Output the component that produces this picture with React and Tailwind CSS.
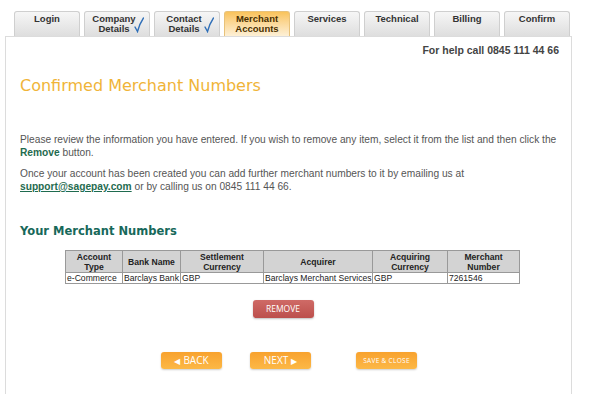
const TABS = [
  { label: ['Login'] },
  { label: ['Company', 'Details'], done: true },
  { label: ['Contact', 'Details'], done: true },
  { label: ['Merchant', 'Accounts'], active: true },
  { label: ['Services'] },
  { label: ['Technical'] },
  { label: ['Billing'] },
  { label: ['Confirm'] },
]

const COLS = [
  { label: ['Account', 'Type'], w: 'w-[57px]', v: 'e-Commerce' },
  { label: ['Bank Name'], w: 'w-[58px]', v: 'Barclays Bank' },
  { label: ['Settlement', 'Currency'], w: 'w-[83px]', v: 'GBP' },
  { label: ['Acquirer'], w: 'w-[109px]', v: 'Barclays Merchant Services' },
  { label: ['Acquiring', 'Currency'], w: 'w-[75px]', v: 'GBP' },
  { label: ['Merchant', 'Number'], w: 'w-[72px]', v: '7261546' },
]

function Tab({ tab }) {
  const base = tab.active
    ? 'bg-gradient-to-b from-[#f9c35a] to-[#fdf0d6] border-[#e8c27a] text-[#4a3000]'
    : 'bg-gradient-to-b from-[#f6f6f6] to-[#dedede] border-[#cfcfcf] text-[#333]'
  return (
    <div className={`relative w-[66px] h-[25px] pt-[2px] rounded-t-[3px] border border-b-0 flex items-start justify-center ${base}`}>
      <div className={`text-center text-[9.5px] font-bold leading-[10px] ${tab.done ? 'mr-[6px]' : ''}`}>
        {tab.label.map((l) => <div key={l}>{l}</div>)}
      </div>
      {tab.done && (
        <svg className="absolute right-[5px] top-[5px]" width="10" height="16" viewBox="0 0 10 16">
          <path d="M1 10 L3.5 14.5 Q5.5 7 9.5 1" fill="none" stroke="#2f6fb8" strokeWidth="1.4" strokeLinecap="round" />
        </svg>
      )}
    </div>
  )
}

function OrangeBtn({ children, small }) {
  return (
    <div className={`w-[61px] h-[17px] rounded-[3px] bg-gradient-to-b from-[#f8a22e] to-[#fcb846] shadow-[0_1px_2px_rgba(0,0,0,0.2)] flex items-center justify-center text-white font-['Open_Sans',sans-serif] ${small ? 'text-[6.5px] tracking-[0.3px]' : 'text-[10px]'}`}>
      {children}
    </div>
  )
}

export default function App() {
  return (
    <div className="w-[590px] h-[394px] overflow-hidden bg-white font-['Liberation_Sans',Arial,sans-serif]">
      <div className="flex gap-[4px] pl-[14px] pt-[11px]">
        {TABS.map((t, i) => <Tab key={i} tab={t} />)}
      </div>
      <div className="ml-[5px] w-[567px] h-[400px] border border-[#dcdcdc]">
        <div className="text-right pr-[12px] pt-[6px] text-[10.5px] font-bold text-[#444]">
          For help call 0845 111 44 66
        </div>
        <h1 className="mt-[15px] ml-[14px] text-[16px] text-[#f0b438] font-['DejaVu_Sans',Verdana,sans-serif]">
          Confirmed Merchant Numbers
        </h1>
        <div className="mt-[35px] ml-[14px] pr-[4px] text-[10.2px] leading-[13px] text-[#555]">
          <p>
            Please review the information you have entered. If you wish to remove any item, select it from the list and then click the{' '}
            <b className="text-[#1f6b4f]">Remove</b> button.
          </p>
          <p className="mt-[8px]">
            Once your account has been created you can add further merchant numbers to it by emailing us at{' '}
            <br />
            <a className="font-bold underline text-[#1f6b4f]">support@sagepay.com</a> or by calling us on 0845 111 44 66.
          </p>
        </div>
        <h2 className="mt-[30px] ml-[14px] text-[11.5px] font-bold text-[#17685a] font-['DejaVu_Sans',Verdana,sans-serif]">
          Your Merchant Numbers
        </h2>
        <table className="mt-[10px] ml-[59px] w-[454px] table-fixed border-collapse text-[8.6px] text-[#222]">
          <thead>
            <tr className="bg-[#d3d3d3]">
              {COLS.map((c) => (
                <th key={c.v + c.w} className={`${c.w} h-[22px] border border-[#999] font-bold leading-[10px] text-center`}>
                  {c.label.map((l) => <div key={l}>{l}</div>)}
                </th>
              ))}
            </tr>
          </thead>
          <tbody>
            <tr>
              {COLS.map((c) => (
                <td key={c.w + c.v} className="h-[11px] border border-[#999] px-[1px] leading-[10px] whitespace-nowrap overflow-hidden font-normal">
                  {c.v}
                </td>
              ))}
            </tr>
          </tbody>
        </table>
        <div className="mt-[16px] flex justify-center pr-[11px]">
          <div className="w-[61px] h-[18px] rounded-[3px] bg-gradient-to-b from-[#cf6a66] to-[#bc4f4c] shadow-[0_1px_2px_rgba(0,0,0,0.25)] flex items-center justify-center text-white text-[8.5px] font-['Open_Sans',sans-serif]">
            REMOVE
          </div>
        </div>
        <div className="mt-[34px] flex pl-[155px]">
          <OrangeBtn>
            <span className="mr-[3px] text-[8px]">◀</span>BACK
          </OrangeBtn>
          <div className="ml-[28px]">
            <OrangeBtn>
              NEXT<span className="ml-[3px] text-[8px]">▶</span>
            </OrangeBtn>
          </div>
          <div className="ml-[45px]">
            <OrangeBtn small>SAVE &amp; CLOSE</OrangeBtn>
          </div>
        </div>
      </div>
    </div>
  )
}
